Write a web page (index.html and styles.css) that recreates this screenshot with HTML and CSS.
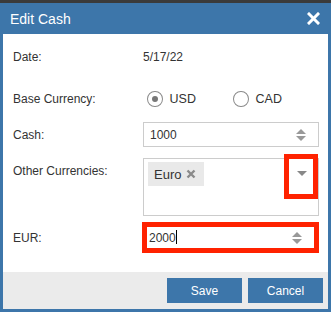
FILE: index.html
```html
<!DOCTYPE html>
<html lang="en">
<head>
  <meta charset="UTF-8">
  <title>Edit Cash</title>
  <link rel="stylesheet" href="styles.css">
</head>
<body>

<div class="dialog">
  <div class="dialog-title">
    <span>Edit Cash</span>
    <svg class="close" width="13" height="13" viewBox="0 0 13 13">
      <path d="M2 2 L11 11 M11 2 L2 11" stroke="#fff" stroke-width="3" stroke-linecap="square"/>
    </svg>
  </div>

  <div class="dialog-body">
    <div class="row row-date">
      <label>Date:</label>
      <span>5/17/22</span>
    </div>

    <div class="row row-radio">
      <label>Base Currency:</label>
      <div class="radios">
        <span class="radio checked"></span><span class="radio-text">USD</span>
        <span class="radio"></span><span class="radio-text">CAD</span>
      </div>
    </div>

    <div class="row row-input">
      <label>Cash:</label>
      <div class="numeric">
        <span class="value">1000</span>
        <span class="spin"><i class="up"></i><i class="down"></i></span>
      </div>
    </div>

    <div class="row row-multi">
      <label>Other Currencies:</label>
      <div class="multiselect">
        <span class="tag">Euro
          <svg width="10" height="10" viewBox="0 0 10 10">
            <path d="M1.5 1.5 L8.5 8.5 M8.5 1.5 L1.5 8.5" stroke="#8a8a8a" stroke-width="2.4"/>
          </svg>
        </span>
        <span class="arrow"></span>
        <span class="mark"></span>
      </div>
    </div>

    <div class="row row-eur">
      <label>EUR:</label>
      <div class="numeric highlight">
        <span class="value">2000<span class="caret"></span></span>
        <span class="spin"><i class="up"></i><i class="down"></i></span>
      </div>
    </div>
  </div>

  <div class="dialog-footer">
    <button>Save</button>
    <button>Cancel</button>
  </div>
</div>

</body>
</html>
```

FILE: styles.css
```css
/* Page */
body {
  margin: 0;
  padding-top: 3px;
  background: #3b3b3b;
  font-family: 'Liberation Sans', Arial, sans-serif;
  font-size: 12px;
  color: #333;
}

/* Dialog frame */
.dialog {
  width: 331px;
  height: 309px;
  box-sizing: border-box;
  border: 3px solid #3d76aa;
  border-top: none;
  background: #fff;
  display: flex;
  flex-direction: column;
}

.dialog-title {
  height: 31px;
  margin: 0 -3px;
  padding: 0 11px 0 10px;
  background: #3d76aa;
  color: #fff;
  font-size: 14px;
  display: flex;
  align-items: center;
  justify-content: space-between;
}

/* Form rows */
.dialog-body {
  flex: 1;
  padding: 8px 9px 0 10px;
}

.row {
  display: grid;
  grid-template-columns: 130px 176px;
  align-items: center;
}

.row-date { height: 30px; }
.row-radio { height: 30px; margin-top: 12px; }
.row-input { margin-top: 8px; }
.row-multi { margin-top: 11px; align-items: start; }
.row-multi label { padding-top: 6px; }
.row-eur { margin-top: 6px; }

/* Radios */
.radios {
  display: flex;
  align-items: center;
  padding-left: 4px;
}

.radio {
  width: 16px;
  height: 16px;
  box-sizing: border-box;
  border: 1.5px solid #8a8a8a;
  border-radius: 50%;
  display: flex;
  align-items: center;
  justify-content: center;
}

.radio.checked::after {
  content: '';
  width: 6px;
  height: 6px;
  border-radius: 50%;
  background: #777;
}

.radio-text {
  margin: 0 37px 0 7px;
  font-size: 12.5px;
}

/* Numeric inputs */
.numeric {
  height: 25px;
  box-sizing: border-box;
  border: 1px solid #ccc;
  padding: 0 12px 0 6px;
  display: flex;
  align-items: center;
  justify-content: space-between;
}

.numeric.highlight {
  height: 31px;
  margin-left: -1px;
  border: 5px solid #ff2200;
  padding: 0 12px 0 2px;
}

.caret {
  display: inline-block;
  width: 1px;
  height: 14px;
  background: #000;
  vertical-align: -2px;
}

.spin {
  display: flex;
  flex-direction: column;
  gap: 2px;
}

.spin i {
  width: 0;
  height: 0;
  border-left: 5px solid transparent;
  border-right: 5px solid transparent;
}

.spin .up { border-bottom: 5px solid #999; }
.spin .down { border-top: 5px solid #999; }

/* Multi select */
.multiselect {
  position: relative;
  height: 58px;
  box-sizing: border-box;
  border: 1px solid #ccc;
  padding: 3px 4px;
}

.tag {
  display: inline-flex;
  align-items: center;
  gap: 5px;
  height: 24px;
  padding: 0 8px 0 6px;
  background: #e9e9e9;
  font-size: 13px;
}

.arrow {
  position: absolute;
  top: 12px;
  right: 11px;
  border-left: 5px solid transparent;
  border-right: 5px solid transparent;
  border-top: 5px solid #888;
}

.mark {
  position: absolute;
  top: -5px;
  right: 0;
  width: 34px;
  height: 45px;
  box-sizing: border-box;
  border: 5px solid #ff2200;
}

/* Footer */
.dialog-footer {
  height: 37px;
  background: #ebebeb;
  display: flex;
  justify-content: flex-end;
  align-items: center;
  gap: 6px;
  padding-right: 5px;
}

.dialog-footer button {
  width: 75px;
  height: 25px;
  border: none;
  background: #3d76aa;
  color: #fff;
  font-family: 'Liberation Sans', Arial, sans-serif;
  font-size: 12px;
}
```
